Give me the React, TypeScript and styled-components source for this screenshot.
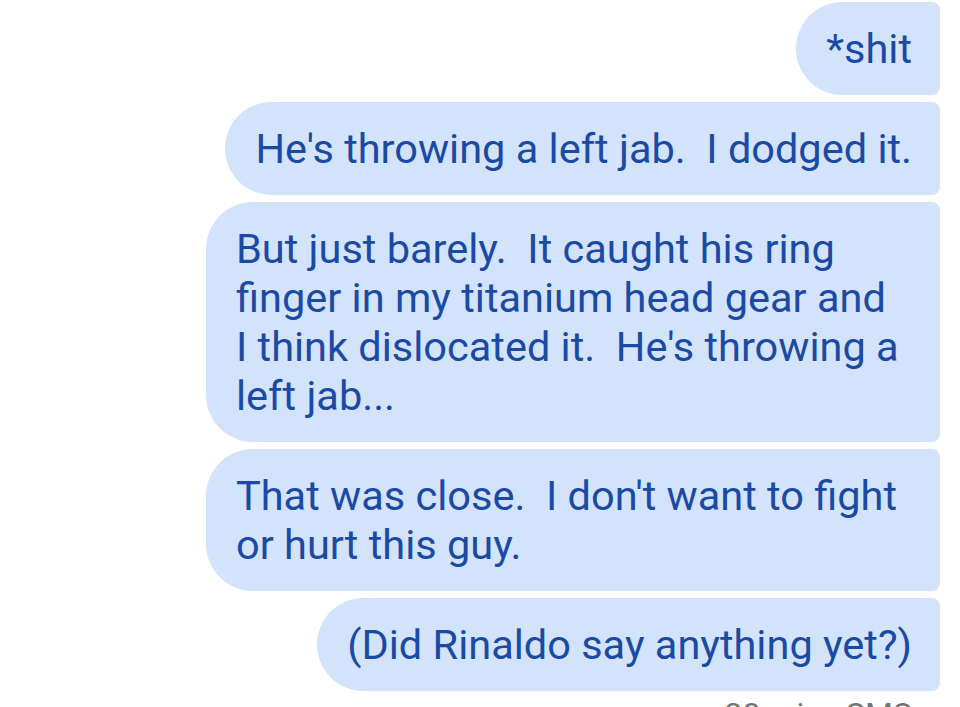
import styled, { createGlobalStyle } from "styled-components";

const GlobalStyle = createGlobalStyle`
  html, body {
    margin: 0;
    padding: 0;
    background: #ffffff;
    overflow: hidden;
  }
`;

const Thread = styled.div`
  display: flex;
  flex-direction: column;
  align-items: flex-end;
  gap: 7px;
  padding: 2px 20px 0 0;
  width: 960px;
  height: 707px;
  box-sizing: border-box;
  font-family: Roboto, "Noto Sans", sans-serif;
`;

const Bubble = styled.div`
  max-width: 734px;
  box-sizing: border-box;
  padding: 22px 28px 22px 30px;
  background: #d3e3fc;
  color: #1a4aa3;
  font-size: 41.5px;
  line-height: 49px;
  white-space: pre-wrap;
  border-radius: 47px 8px 8px 47px;
`;

const Meta = styled.div`
  margin-top: 0;
  padding-right: 28px;
  color: #757575;
  font-size: 32px;
  line-height: 32px;
`;

const messages = [
  "*shit",
  "He's throwing a left jab.  I dodged it.",
  "But just barely.  It caught his ring finger in my titanium head gear and\nI think dislocated it.  He's throwing a left jab...",
  "That was close.  I don't want to fight or hurt this guy.",
  "(Did Rinaldo say anything yet?)",
];

export default function App() {
  return (
    <>
      <GlobalStyle />
      <Thread>
        {messages.map((text, i) => (
          <Bubble key={i}>{text}</Bubble>
        ))}
        <Meta>38 min · SMS</Meta>
      </Thread>
    </>
  );
}
